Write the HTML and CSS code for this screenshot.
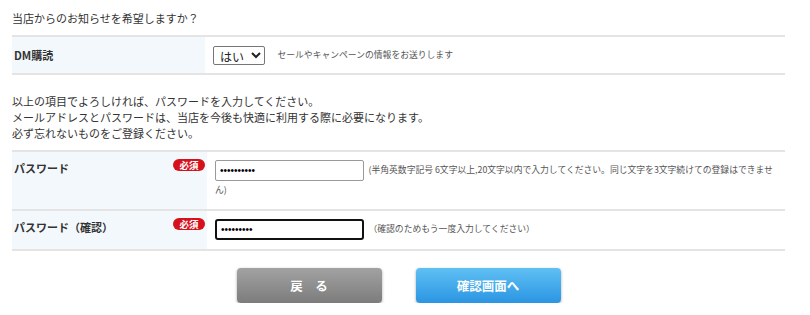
FILE: index.html
```html
<!DOCTYPE html>
<html lang="ja">
<head>
    <meta charset="UTF-8">
    <title>会員登録</title>
    <link rel="stylesheet" href="styles.css">
</head>
<body>
    <p class="lead">当店からのお知らせを希望しますか？</p>
    <table class="form-table">
        <tr class="row-dm">
            <th>DM購読</th>
            <td>
                <select class="dm-select">
                    <option>はい</option>
                    <option>いいえ</option>
                </select>
                <span class="note">セールやキャンペーンの情報をお送りします</span>
            </td>
        </tr>
    </table>

    <p class="message">以上の項目でよろしければ、パスワードを入力してください。<br>
    メールアドレスとパスワードは、当店を今後も快適に利用する際に必要になります。<br>
    必ず忘れないものをご登録ください。</p>

    <table class="form-table">
        <tr class="row-pass">
            <th>パスワード<span class="required">必須</span></th>
            <td>
                <input type="password" class="pass-input" value="aaaaaaaaaa">
                <span class="note">(半角英数字記号 6文字以上,20文字以内で入力してください。同じ文字を3文字続けての登録はできません)</span>
            </td>
        </tr>
        <tr class="row-pass">
            <th>パスワード（確認）<span class="required">必須</span></th>
            <td>
                <input type="password" class="pass-input focused" value="aaaaaaaaa">
                <span class="note">（確認のためもう一度入力してください）</span>
            </td>
        </tr>
    </table>

    <div class="buttons">
        <button class="btn btn-back">戻　る</button>
        <button class="btn btn-next">確認画面へ</button>
    </div>
</body>
</html>
```

FILE: styles.css
```css
body {
    margin: 0;
    padding: 9px 25px 0 12px;
    font-family: "Noto Sans CJK JP", "Noto Sans", sans-serif;
    font-size: 11px;
    color: #333;
    background: #fff;
}

.lead {
    margin: 0 0 8px 0;
    line-height: 18px;
}

/* フォーム表 */
.form-table {
    width: 773px;
    border-collapse: collapse;
    border-top: 2px solid #e4e4e4;
}
.form-table th,
.form-table td {
    border-bottom: 2px solid #e4e4e4;
    padding: 0;
}
.form-table th {
    width: 191px;
    background-color: #f3f8fc;
    text-align: left;
    font-weight: bold;
    padding-left: 2px;
}
.form-table td {
    padding-left: 8px;
    padding-right: 8px;
}

.row-dm th,
.row-dm td {
    height: 36px;
    vertical-align: middle;
}

.dm-select {
    width: 52px;
    height: 19px;
    font-family: inherit;
    font-size: 12px;
    color: #222;
    border: 1px solid #767676;
    border-radius: 2px;
    background: #fff;
    padding: 0 2px;
    vertical-align: middle;
}

.note {
    font-size: 8.8px;
    color: #555;
}
.row-dm .note {
    margin-left: 10px;
}

.message {
    margin: 18px 0 9px 0;
    line-height: 16px;
}

/* パスワード行 */
.row-pass th,
.row-pass td {
    vertical-align: top;
    padding-top: 8px;
    padding-bottom: 9px;
}
.row-pass th {
    line-height: 16px;
    padding-right: 2px;
}
.row-pass:first-child th,
.row-pass:first-child td {
    padding-bottom: 12px;
}
.row-pass td {
    line-height: 14px;
}

.required {
    float: right;
    width: 32px;
    height: 12px;
    margin-top: -1px;
    border-radius: 6px;
    background-color: #d5121c;
    color: #fff;
    font-size: 9.5px;
    line-height: 12px;
    text-align: center;
}

.pass-input {
    box-sizing: border-box;
    width: 149px;
    height: 21px;
    margin: 0;
    padding: 0 4px;
    border: 1px solid #9a9a9a;
    border-radius: 2px;
    font-size: 10px;
    vertical-align: middle;
    background: #fff;
}
.pass-input.focused {
    border: 2px solid #111;
    border-radius: 3px;
}
.row-pass .note {
    margin-left: 2px;
}

/* ボタン */
.buttons {
    display: flex;
    justify-content: center;
    gap: 34px;
    width: 773px;
    margin-top: 17px;
}
.btn {
    width: 145px;
    height: 35px;
    border: none;
    border-radius: 4px;
    color: #fff;
    font-family: inherit;
    font-size: 12.5px;
    font-weight: bold;
    box-shadow: 0 1px 3px rgba(0, 0, 0, 0.35);
    cursor: pointer;
}
.btn-back {
    background: linear-gradient(#a2a2a2, #7c7c7c);
}
.btn-next {
    background: linear-gradient(#5fc0f3, #2b95e3);
}
```
